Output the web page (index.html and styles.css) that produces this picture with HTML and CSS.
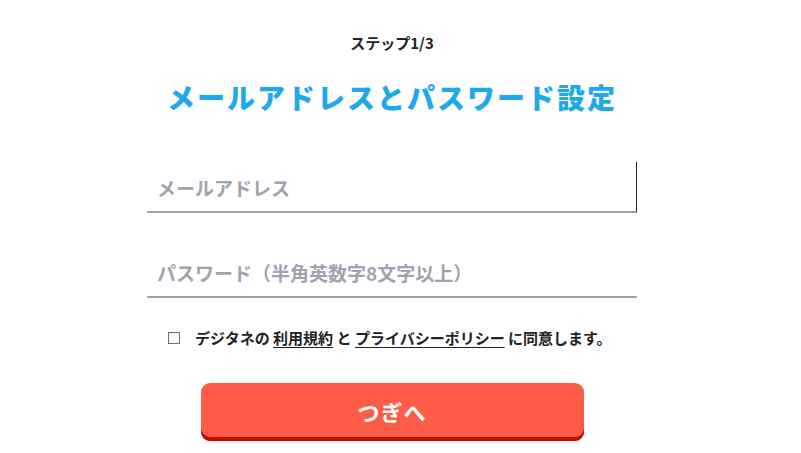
FILE: index.html
```html
<!doctype html>
<html>
<head>
  <meta charset="utf-8">
  <link rel="stylesheet" href="styles.css">
</head>
<body>
  <div class="page">
    <div class="step">ステップ1/3</div>
    <h1 class="title">メールアドレスとパスワード設定</h1>
    <form class="form">
      <div class="field field-focus">
        <input type="text" placeholder="メールアドレス">
      </div>
      <div class="field">
        <input type="password" placeholder="パスワード（半角英数字8文字以上）">
      </div>
      <label class="agree">
        <span class="box"></span>
        <span>デジタネの <a href="#">利用規約</a> と <a href="#">プライバシーポリシー</a> に同意します。</span>
      </label>
      <button type="button" class="next">つぎへ</button>
    </form>
  </div>
</body>
</html>
```

FILE: styles.css
```css
html, body {
  margin: 0;
  padding: 0;
  background: #fff;
  font-family: "Noto Sans CJK JP", "Noto Sans", sans-serif;
  color: #222;
}
.page {
  width: 784px;
  display: flex;
  flex-direction: column;
  align-items: center;
  padding-top: 33px;
}
.step {
  font-size: 15px;
  font-weight: 700;
  line-height: 20px;
}
.title {
  margin: 24px 0 0;
  font-size: 28px;
  line-height: 40px;
  font-weight: 900;
  color: #1fa9ea;
  letter-spacing: 2px;
}
.form {
  width: 490px;
  margin-top: 45px;
  display: flex;
  flex-direction: column;
  align-items: center;
}
.field {
  width: 100%;
  height: 49px;
  border-bottom: 2px solid #9fa1ab;
  box-sizing: content-box;
}
.field + .field {
  margin-top: 34px;
}
.field-focus {
  border-right: 1px solid #222;
  width: 489px;
}
.field input {
  width: 100%;
  height: 100%;
  box-sizing: border-box;
  border: 0;
  outline: none;
  padding: 0 10px;
  padding-top: 2px;
  font-family: inherit;
  font-size: 19px;
  font-weight: 700;
  background: transparent;
}
.field input::placeholder {
  color: #9fa3b0;
}
.agree {
  display: flex;
  align-items: center;
  margin-top: 30px;
  font-size: 15px;
  font-weight: 700;
  line-height: 20px;
  width: 100%;
  box-sizing: border-box;
  padding-left: 21px;
}
.box {
  width: 10px;
  height: 10px;
  border: 1px solid #6a6e78;
  margin-right: 15px;
}
.agree a {
  color: #222;
  text-decoration: underline;
  text-underline-offset: 3px;
}
.next {
  margin-top: 35px;
  width: 383px;
  height: 58px;
  border: 0;
  border-radius: 9px;
  background: #ff5c48;
  box-shadow: inset 0 -4px 0 #c50a04;
  color: #fff;
  font-family: inherit;
  font-size: 22px;
  letter-spacing: 1px;
  font-weight: 700;
  padding-bottom: 4px;
  cursor: pointer;
}
```
